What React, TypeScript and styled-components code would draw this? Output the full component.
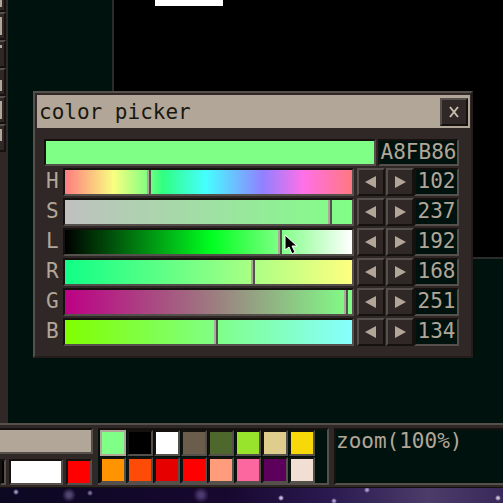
import React, { useState } from "react";
import styled, { createGlobalStyle, css } from "styled-components";

const ink = "#00120d";
const panel = "#302826";
const light = "#55504c";
const dark = "#15110f";
const sand = "#b2a698";
const mono = '"DejaVu Sans Mono", "Liberation Mono", monospace';

const GlobalStyle = createGlobalStyle`
  *, *::before, *::after { box-sizing: border-box; }
  body { margin: 0; background: ${ink}; overflow: hidden; }
  button, input { font: inherit; color: inherit; margin: 0; padding: 0; border-radius: 0; }
`;

const raised = css`
  border: 2px solid;
  border-color: ${light} ${dark} ${dark} ${light};
`;

const sunken = css`
  border: 2px solid;
  border-color: ${dark} ${light} ${light} ${dark};
`;

const Page = styled.div`
  position: relative;
  display: flex;
  flex-direction: column;
  height: 100vh;
  font: 21px/22px ${mono};
  color: ${sand};
`;

const Workspace = styled.main`
  display: flex;
  flex: 1;
  min-height: 0;
`;

const Toolbar = styled.nav`
  display: flex;
  flex-direction: column;
  width: 8px;
  background: ${panel};
  overflow: hidden;
`;

const Tool = styled.button`
  display: flex;
  flex: none;
  width: 6px;
  height: 28px;
  border: 2px solid;
  border-color: ${light} ${dark} ${dark} ${panel};
  border-left: 0;
  background: ${panel};
  &:first-child { height: 12px; border-top: 0; }
`;

const ToolMark = styled.span<{ $top: number; $height: number }>`
  width: 2px;
  height: ${(p) => p.$height}px;
  margin-top: ${(p) => p.$top}px;
  background: ${sand};
`;

const Stage = styled.section`
  flex: 1;
  padding-left: 104px;
`;

const Canvas = styled.div`
  height: 259px;
  padding-left: 41px;
  border-left: 2px solid #2b2b2a;
  border-bottom: 2px solid #2b2b2a;
  background: #000;
`;

const Paper = styled.div`
  width: 68px;
  height: 6px;
  background: #fff;
`;

const Dialog = styled.section`
  position: absolute;
  top: 91px;
  left: 33px;
  right: 30px;
  ${raised}
  border-color: ${light} #231c1a #231c1a ${light};
  padding: 2px 1px 10px 2px;
  background: ${panel};
`;

const TitleBar = styled.header`
  display: flex;
  align-items: center;
  justify-content: space-between;
  height: 33px;
  padding: 0 2px;
  background: ${sand};
`;

const Title = styled.h1`
  margin: 0;
  font: inherit;
  color: #19180f;
`;

const Key = styled.button`
  display: grid;
  place-items: center;
  flex: none;
  width: 28px;
  height: 28px;
  ${raised}
  background: ${panel};
`;

const Body = styled.div`
  display: flex;
  flex-direction: column;
  gap: 2px;
  padding: 11px 11px 0 7px;
`;

const Row = styled.div`
  display: flex;
  align-items: center;
  height: 28px;
`;

const PreviewRow = styled(Row)`
  height: 27px;
  align-items: stretch;
  gap: 2px;
`;

const Preview = styled.div`
  flex: 1;
  ${sunken}
  background: #80ff86;
`;

const Field = styled.input<{ $wide?: boolean }>`
  flex: none;
  width: ${(p) => (p.$wide ? 81 : 45)}px;
  height: ${(p) => (p.$wide ? 27 : 28)}px;
  padding-bottom: 2px;
  ${sunken}
  background: ${ink};
  text-align: center;
  outline: none;
`;

const Label = styled.label`
  width: 19px;
  padding: 0 0 2px 2px;
`;

const Keys = styled.div`
  display: flex;
  gap: 1px;
  padding-left: 3px;
`;

const Slider = styled.input<{ $fill: string }>`
  appearance: none;
  flex: 1;
  min-width: 0;
  height: 28px;
  ${sunken}
  background: linear-gradient(to right, ${(p) => p.$fill}) padding-box;
  outline: none;
  &::-webkit-slider-thumb {
    appearance: none;
    width: 4px;
    height: 24px;
    border-left: 2px solid ${sand};
    border-right: 2px solid #4b554b;
    background: ${sand};
  }
`;

const Pointer = styled.svg`
  position: absolute;
  top: 234px;
  left: 284px;
  pointer-events: none;
`;

const Dock = styled.footer`
  display: flex;
  flex: none;
  gap: 3px;
  height: 65px;
  padding: 3px 0 2px;
  border-top: 2px solid ${light};
  border-bottom: 1px solid ${dark};
  background: ${panel};
`;

const Current = styled.div`
  display: flex;
  flex-direction: column;
  justify-content: space-between;
  width: 95px;
`;

const Shade = styled.div`
  width: 93px;
  height: 26px;
  ${sunken}
  border-left: 0;
  background: ${sand};
`;

const CurrentRow = styled.div`
  display: flex;
  gap: 3px;
`;

const Chip = styled.button<{ $color: string; $width: number }>`
  width: ${(p) => p.$width}px;
  height: 26px;
  ${sunken}
  background: ${(p) => p.$color};
`;

const Palette = styled.div`
  display: grid;
  grid-template-columns: repeat(8, 27px);
  grid-template-rows: 27px 27px;
  width: 231px;
  padding: 0 0 0 2px;
  ${sunken}
  border-left: 0;
  background: ${ink};
`;

const Swatch = styled.button<{ $color: string; $active?: boolean }>`
  width: 26px;
  height: 26px;
  ${sunken}
  ${(p) => p.$active && css`border-color: ${sand};`}
  background: ${(p) => p.$color};
`;

const Status = styled.output`
  flex: 1;
  margin-left: 2px;
  ${sunken}
  border-right: 0;
  background: ${ink};
`;

const Sky = styled.div`
  flex: none;
  height: 15px;
  background:
    radial-gradient(circle at 16px 4px, #9c91bd 0 1px, transparent 3px),
    radial-gradient(circle at 69px 7px, #51466f 0 2px, transparent 7px),
    radial-gradient(circle at 90px 5px, #776a98 0 1px, transparent 3px),
    radial-gradient(circle at 201px 7px, #4d3a70 0 2px, transparent 8px),
    radial-gradient(circle at 281px 10px, #c6b6df 0 1px, transparent 3px),
    radial-gradient(circle at 334px 13px, #aa98ce 0 1px, transparent 3px),
    radial-gradient(circle at 367px 2px, #aa98ce 0 1px, transparent 3px),
    radial-gradient(circle at 498px 10px, #c9bfd9 0 1px, transparent 3px),
    linear-gradient(to right, #0c0822, #170830 45%, #29194f 65%, #4b3c6a 85%, #39295a);
`;

type Channel = { name: string; value: number; max: number; fill: string };

const channels: Channel[] = [
  { name: "H", value: 102, max: 351, fill: "#ff7c80, #f8ff80 17%, #80ff80 29%, #30ff80 34%, #45ffff 49%, #9180ff 69%, #ff70e8 83%, #ff7880" },
  { name: "S", value: 237, max: 255, fill: "#c0c0c0, #80ff86" },
  { name: "L", value: 192, max: 255, fill: "#000, #00ff20 51%, #80ff86 75%, #fff" },
  { name: "R", value: 168, max: 255, fill: "#10ff86, #80ff86 48%, #ffff80" },
  { name: "G", value: 251, max: 255, fill: "#bd0086, #a07080 47%, #80ff86" },
  { name: "B", value: 134, max: 255, fill: "#80ff00, #80ff86 52%, #86ffff" },
];

const swatches = [
  "#80ff86", "#000000", "#ffffff", "#6b5d4b", "#4d672c", "#98e32b", "#dfcd8d", "#f7d808",
  "#ff9400", "#ff4b08", "#e60000", "#ff0000", "#ff9c7c", "#fc679f", "#5c005c", "#f2dfd4",
];

const tools = [
  { name: "Select", top: 0, height: 7 },
  { name: "Pencil", top: 3, height: 18 },
  { name: "Brush", top: 3, height: 3 },
  { name: "Fill", top: 10, height: 11 },
  { name: "Shape", top: 3, height: 18 },
  { name: "Text", top: 3, height: 12 },
];

function Arrow({ right }: { right?: boolean }) {
  return (
    <svg width="12" height="12" viewBox="0 0 12 12" aria-hidden="true">
      <path d={right ? "M1 0 12 6 1 12Z" : "M11 0 0 6 11 12Z"} fill={sand} />
    </svg>
  );
}

function ChannelRow({ channel }: { channel: Channel }) {
  const { name, max, fill } = channel;
  const [value, setValue] = useState(channel.value);
  const change = (next: number) => setValue(Math.max(0, Math.min(max, next || 0)));
  return (
    <Row>
      <Label htmlFor={`channel-${name}`}>{name}</Label>
      <Slider
        id={`channel-${name}`}
        type="range"
        max={max}
        value={value}
        $fill={fill}
        onChange={(e) => change(Number(e.target.value))}
      />
      <Keys>
        <Key aria-label={`Decrease ${name}`} onClick={() => change(value - 1)}><Arrow /></Key>
        <Key aria-label={`Increase ${name}`} onClick={() => change(value + 1)}><Arrow right /></Key>
      </Keys>
      <Field
        aria-label={`${name} value`}
        value={value}
        onChange={(e) => change(Number(e.target.value))}
      />
    </Row>
  );
}

export default function App() {
  return (
    <Page>
      <GlobalStyle />
      <Workspace>
        <Toolbar aria-label="Tools">
          {tools.map((t) => (
            <Tool key={t.name} aria-label={t.name}>
              <ToolMark $top={t.top} $height={t.height} />
            </Tool>
          ))}
        </Toolbar>
        <Stage>
          <Canvas><Paper /></Canvas>
        </Stage>
      </Workspace>
      <Dock>
        <Current>
          <Shade />
          <CurrentRow>
            <Chip $color="#000" $width={6} aria-label="Black" />
            <Chip $color="#fff" $width={54} aria-label="White" />
            <Chip $color="#f00" $width={26} aria-label="Red" />
          </CurrentRow>
        </Current>
        <Palette>
          {swatches.map((c, i) => (
            <Swatch key={c} $color={c} $active={i === 0} aria-label={c} />
          ))}
        </Palette>
        <Status>zoom(100%)</Status>
      </Dock>
      <Sky />
      <Dialog role="dialog" aria-labelledby="picker-title">
        <TitleBar>
          <Title id="picker-title">color picker</Title>
          <Key aria-label="Close">
            <svg width="12" height="12" viewBox="0 0 12 12" aria-hidden="true">
              <path d="M2 1 10 11M10 1 2 11" stroke="#c9bdae" strokeWidth="2" />
            </svg>
          </Key>
        </TitleBar>
        <Body>
          <PreviewRow>
            <Preview />
            <Field $wide aria-label="Hex color" defaultValue="A8FB86" />
          </PreviewRow>
          {channels.map((c) => <ChannelRow key={c.name} channel={c} />)}
        </Body>
      </Dialog>
      <Pointer width="14" height="21" viewBox="0 0 14 21" aria-hidden="true">
        <path d="M1 1V16L5 13L8 20L11 18L8 12H13Z" fill="#000" stroke="#fff" strokeWidth="1" />
      </Pointer>
    </Page>
  );
}
